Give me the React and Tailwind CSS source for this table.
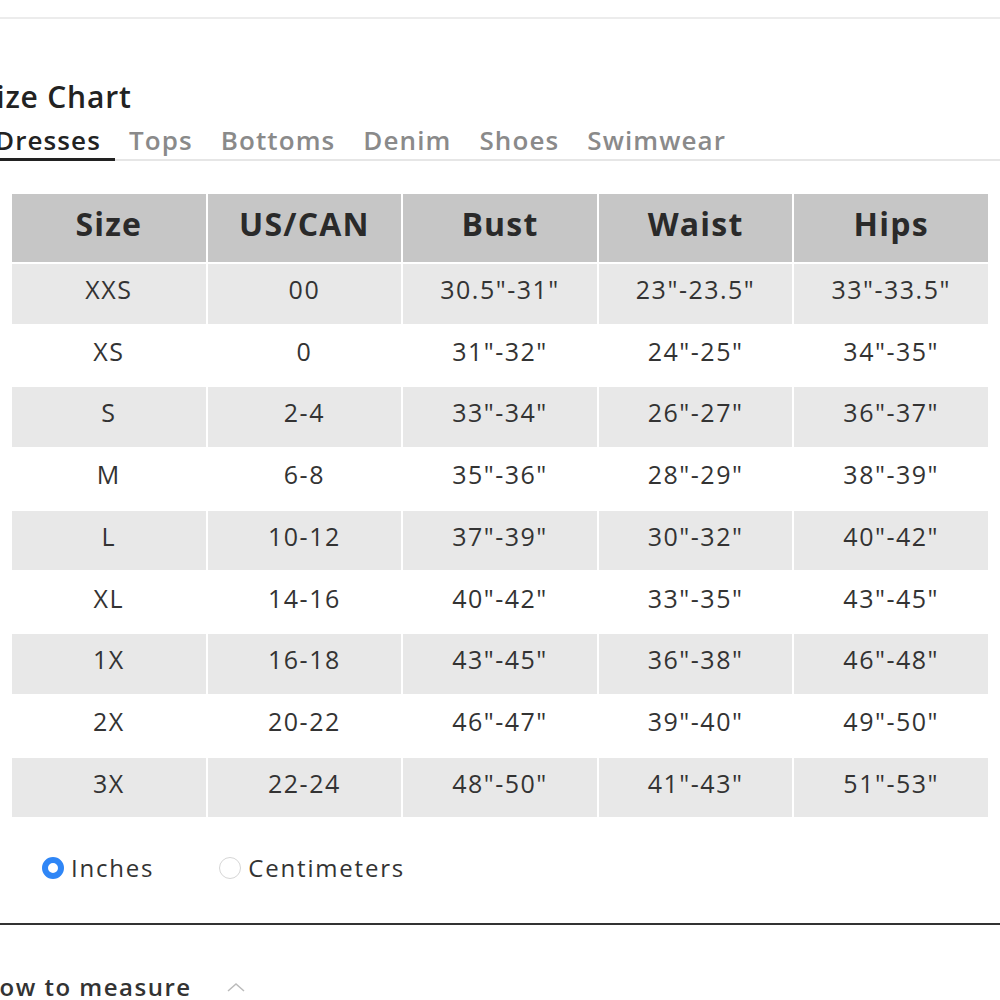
import { useState } from "react";

const TABS = ["Dresses", "Tops", "Bottoms", "Denim", "Shoes", "Swimwear"];

const HEAD = ["Size", "US/CAN", "Bust", "Waist", "Hips"];

const ROWS = [
  ["XXS", "00", "30.5\"-31\"", "23\"-23.5\"", "33\"-33.5\""],
  ["XS", "0", "31\"-32\"", "24\"-25\"", "34\"-35\""],
  ["S", "2-4", "33\"-34\"", "26\"-27\"", "36\"-37\""],
  ["M", "6-8", "35\"-36\"", "28\"-29\"", "38\"-39\""],
  ["L", "10-12", "37\"-39\"", "30\"-32\"", "40\"-42\""],
  ["XL", "14-16", "40\"-42\"", "33\"-35\"", "43\"-45\""],
  ["1X", "16-18", "43\"-45\"", "36\"-38\"", "46\"-48\""],
  ["2X", "20-22", "46\"-47\"", "39\"-40\"", "49\"-50\""],
  ["3X", "22-24", "48\"-50\"", "41\"-43\"", "51\"-53\""],
];

function Radio({ checked, label, onClick }) {
  return (
    <button onClick={onClick} className="flex items-center gap-[7px] text-[24px] tracking-[1.8px] text-[#333]">
      {checked ? (
        <span className="w-[22px] h-[22px] rounded-full border-[6px] border-[#2f86f6] bg-white" />
      ) : (
        <span className="w-[22px] h-[22px] rounded-full border-[1.5px] border-[#d6d6d6] bg-white" />
      )}
      <span>{label}</span>
    </button>
  );
}

export default function App() {
  const [tab, setTab] = useState("Dresses");
  const [unit, setUnit] = useState("in");

  return (
    <div className="w-[1000px] h-[1000px] overflow-hidden bg-white" style={{ fontFamily: '"Open Sans", "Liberation Sans", sans-serif' }}>
      <div className="pt-[17px]">
        <div className="h-[2px] bg-[#ececec]" />
      </div>

      <div className="-ml-[21px] mt-[60px]">
        <h2 className="text-[30px] leading-[36px] font-semibold text-[#222] tracking-[0.8px]">Size Chart</h2>
      </div>

      <div className="flex items-end h-[46px] -ml-[19px] border-b-2 border-[#e6e6e6]">
        {TABS.map((t) => (
          <button
            key={t}
            onClick={() => setTab(t)}
            className={`px-[14px] pt-[6px] h-[46px] text-[26px] font-semibold tracking-[1.1px] -mb-[2px] border-b-[3px] ${tab === t ? "text-[#222] border-[#222]" : "text-[#8a8a8a] border-transparent"}`}
          >
            {t}
          </button>
        ))}
      </div>

      <div className="mt-[33px] ml-[12px] w-[976px] grid grid-cols-5 gap-[2px]">
        {HEAD.map((h) => (
          <div key={h} className="h-[68px] pb-[8px] bg-[#c6c6c6] flex items-center justify-center text-[32px] tracking-[1.2px] font-bold text-[#2a2a2a]">
            {h}
          </div>
        ))}
        {ROWS.map((r, i) =>
          r.map((c, j) => (
            <div
              key={`${i}-${j}`}
              className={`h-[59.7px] pb-[8px] flex items-center justify-center text-[25px] tracking-[1.5px] text-[#333] ${i % 2 === 0 ? "bg-[#e8e8e8]" : "bg-white"}`}
            >
              {c}
            </div>
          ))
        )}
      </div>

      <div className="mt-[36px] ml-[42px] flex items-center gap-[65px] h-[30px]">
        <Radio checked={unit === "in"} label="Inches" onClick={() => setUnit("in")} />
        <Radio checked={unit === "cm"} label="Centimeters" onClick={() => setUnit("cm")} />
      </div>

      <div className="mt-[40px] h-[2px] bg-[#333]" />

      <div className="-ml-[20px] mt-[44px] flex items-center gap-[34px]">
        <span className="text-[24px] font-semibold tracking-[1.5px] text-[#333]">How to measure</span>
        <svg width="20" height="12" viewBox="0 0 20 12" fill="none" stroke="#bbb" strokeWidth="1.5">
          <path d="M2 10 L10 3 L18 10" />
        </svg>
      </div>
    </div>
  );
}
